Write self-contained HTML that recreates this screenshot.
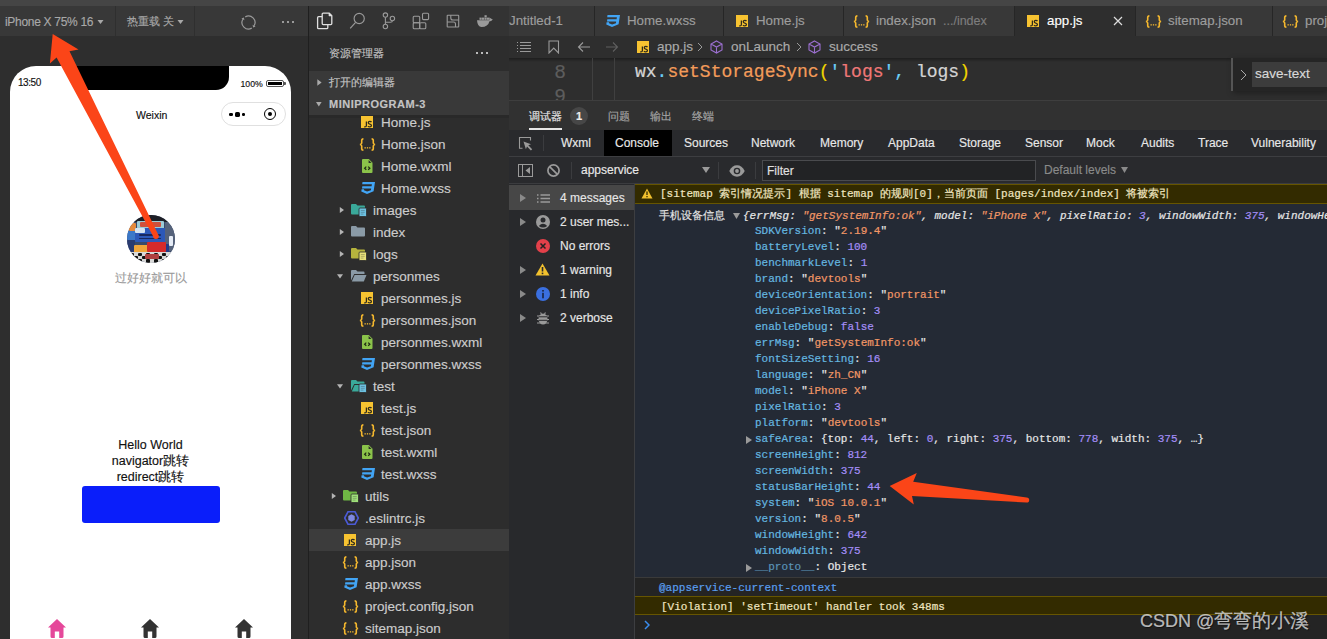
<!DOCTYPE html>
<html><head><meta charset="utf-8">
<style>
*{margin:0;padding:0;box-sizing:border-box}
html,body{width:1327px;height:639px;overflow:hidden;background:#2b2b2b;font-family:"Liberation Sans",sans-serif;position:relative}
.a{position:absolute}
.t{position:absolute;white-space:nowrap;line-height:1;-webkit-text-stroke:0.15px currentColor}
.mono{font-family:"Liberation Mono",monospace;-webkit-text-stroke:0.2px currentColor}
</style></head><body>
<div class="a" style="left:0px;top:0px;width:1327px;height:6px;background:#454545;"></div>
<div class="a" style="left:0px;top:6px;width:308px;height:30px;background:#383838;"></div>
<div class="a" style="left:0px;top:36px;width:308px;height:603px;background:#2e2e2e;"></div>
<div class="a" style="left:115px;top:6px;width:1px;height:30px;background:#2f2f2f;"></div>
<div class="a" style="left:194px;top:6px;width:1px;height:30px;background:#2f2f2f;"></div>
<div class="a" style="left:308px;top:6px;width:1px;height:633px;background:#1f1f1f;"></div>
<div class="t" style="left:5px;top:15.5px;font-size:12px;color:#a8a8a8;letter-spacing:-0.3px">iPhone X 75% 16</div>
<svg class="a" style="left:97px;top:19.5px;" width="7" height="5" viewBox="0 0 7 5"><path d="M0.5 0H6.5L3.5 4Z" fill="#a8a8a8"/></svg>
<div class="t" style="left:127px;top:15.5px;font-size:11px;color:#a8a8a8;">热重载 关</div>
<svg class="a" style="left:177px;top:19.5px;" width="7" height="5" viewBox="0 0 7 5"><path d="M0.5 0H6.5L3.5 4Z" fill="#a8a8a8"/></svg>
<svg class="a" style="left:240.6px;top:14.6px;" width="15" height="15" viewBox="0 0 15 15"><path d="M10.75 13.13A6.5 6.5 0 0 1 1.87 4.25M4.25 1.87A6.5 6.5 0 0 1 13.13 10.75" fill="none" stroke="#9a9a9a" stroke-width="1.2"/><path d="M2.9 2.5L0.4 3.4L3.4 5.2Z M12.1 12.5L14.6 11.6L11.6 9.8Z" fill="#9a9a9a"/></svg>
<div class="a" style="left:282px;top:21px;width:2px;height:2px;background:#9a9a9a;"></div>
<div class="a" style="left:287px;top:21px;width:2px;height:2px;background:#9a9a9a;"></div>
<div class="a" style="left:292px;top:21px;width:2px;height:2px;background:#9a9a9a;"></div>
<div class="a" style="left:10px;top:66px;width:281px;height:600px;background:#fff;border-radius:26px 26px 0 0;overflow:hidden">
<div class="a" style="left:62px;top:0;width:157px;height:24px;background:#000;border-radius:0 0 13px 13px"></div>
</div>
<div class="t" style="left:18px;top:77.8px;font-size:10px;color:#111;letter-spacing:-0.45px">13:50</div>
<div class="t" style="left:240.5px;top:80.3px;font-size:8.7px;color:#111;">100%</div>
<div class="a" style="left:266px;top:79.5px;width:18px;height:7.5px;border:1px solid #555;border-radius:2px"><div class="a" style="left:1px;top:1px;width:14px;height:3.5px;background:#000"></div></div>
<div class="a" style="left:284px;top:81.7px;width:1.8px;height:3.5px;background:#555;border-radius:0 1px 1px 0"></div>
<div class="t" style="left:136px;top:110px;font-size:10.5px;color:#111;">Weixin</div>
<div class="a" style="left:220.5px;top:101.8px;width:65px;height:24px;border:1px solid #e0e0e0;border-radius:12px;background:#fff"></div>
<div class="a" style="left:229px;top:112.8px;width:3.5px;height:3.5px;border-radius:1.2px;background:#000"></div>
<div class="a" style="left:234.8px;top:112px;width:5px;height:5px;border-radius:1.6px;background:#000"></div>
<div class="a" style="left:241.8px;top:112.8px;width:3.5px;height:3.5px;border-radius:1.2px;background:#000"></div>
<div class="a" style="left:263.7px;top:108.3px;width:12px;height:12px;border-radius:6px;border:1.7px solid #000"></div>
<div class="a" style="left:267.7px;top:112.3px;width:4px;height:4px;border-radius:2px;background:#000"></div>
<div class="a" style="left:127px;top:215px;width:48px;height:48px;border-radius:24px;overflow:hidden;filter:blur(0.6px)"><div class="a" style="left:0px;top:0px;width:48px;height:48px;background:#3a4a6a;border-radius:1px"></div><div class="a" style="left:0px;top:0px;width:48px;height:7px;background:#1d1f26;border-radius:1px"></div><div class="a" style="left:10px;top:6px;width:27px;height:8px;background:#9ccbd6;border-radius:1px"></div><div class="a" style="left:13px;top:7px;width:21px;height:5px;background:#d0503c;border-radius:1px"></div><div class="a" style="left:2px;top:8px;width:7px;height:8px;background:#e58a3c;border-radius:1px"></div><div class="a" style="left:0px;top:16px;width:9px;height:9px;background:#3b78c8;border-radius:1px"></div><div class="a" style="left:8px;top:13px;width:31px;height:14px;background:#2c58b8;border-radius:1px"></div><div class="a" style="left:8px;top:13px;width:10px;height:5px;background:#d6e4f0;border-radius:1px"></div><div class="a" style="left:12px;top:19px;width:22px;height:1.5px;background:#18285e;border-radius:1px"></div><div class="a" style="left:12px;top:22.5px;width:22px;height:1.5px;background:#18285e;border-radius:1px"></div><div class="a" style="left:38px;top:7px;width:10px;height:29px;background:#55627a;border-radius:1px"></div><div class="a" style="left:42px;top:21px;width:4px;height:10px;background:#e6ecf6;border-radius:1px"></div><div class="a" style="left:0px;top:25px;width:8px;height:12px;background:#2a3b70;border-radius:1px"></div><div class="a" style="left:36px;top:29px;width:6px;height:9px;background:#233a88;border-radius:1px"></div><div class="a" style="left:7px;top:29.5px;width:15px;height:8px;background:#f0a53a;border-radius:1px"></div><div class="a" style="left:20px;top:26.5px;width:19px;height:10.5px;background:#d42a2a;border-radius:1px"></div><div class="a" style="left:0px;top:37px;width:48px;height:11px;background:#d8d8d8;border-radius:1px"></div><div class="a" style="left:3px;top:38px;width:4px;height:3px;background:#111;border-radius:1px"></div><div class="a" style="left:11px;top:38px;width:4px;height:3px;background:#111;border-radius:1px"></div><div class="a" style="left:19px;top:38px;width:4px;height:3px;background:#111;border-radius:1px"></div><div class="a" style="left:27px;top:38px;width:4px;height:3px;background:#111;border-radius:1px"></div><div class="a" style="left:35px;top:38px;width:4px;height:3px;background:#111;border-radius:1px"></div><div class="a" style="left:43px;top:38px;width:4px;height:3px;background:#111;border-radius:1px"></div><div class="a" style="left:7px;top:41px;width:4px;height:3px;background:#111;border-radius:1px"></div><div class="a" style="left:15px;top:41px;width:4px;height:3px;background:#111;border-radius:1px"></div><div class="a" style="left:23px;top:41px;width:4px;height:3px;background:#111;border-radius:1px"></div><div class="a" style="left:31px;top:41px;width:4px;height:3px;background:#111;border-radius:1px"></div><div class="a" style="left:39px;top:41px;width:4px;height:3px;background:#111;border-radius:1px"></div><div class="a" style="left:3px;top:44px;width:4px;height:4px;background:#111;border-radius:1px"></div><div class="a" style="left:11px;top:44px;width:4px;height:4px;background:#111;border-radius:1px"></div><div class="a" style="left:19px;top:44px;width:4px;height:4px;background:#111;border-radius:1px"></div><div class="a" style="left:27px;top:44px;width:4px;height:4px;background:#111;border-radius:1px"></div><div class="a" style="left:35px;top:44px;width:4px;height:4px;background:#111;border-radius:1px"></div><div class="a" style="left:18px;top:39px;width:14px;height:5px;background:#b04040;border-radius:1px"></div></div>
<div class="t" style="left:115px;top:272px;font-size:12px;color:#999;">过好好就可以</div>
<div class="t" style="left:10px;top:437px;width:281px;text-align:center;font-size:12.5px;color:#111;line-height:16px">Hello World<br>navigator跳转<br>redirect跳转</div>
<div class="a" style="left:82px;top:486px;width:138px;height:37px;background:#0a1efa;border-radius:3px"></div>
<svg class="a" style="left:48px;top:619px;" width="18" height="20" viewBox="0 0 18 20"><path d="M9 0L18 8.5H15.5V17.5Q15.5 19 14 19H11.2V12.5H6.8V19H4Q2.5 19 2.5 17.5V8.5H0Z" fill="#e5489a"/></svg>
<svg class="a" style="left:141px;top:619px;" width="18" height="20" viewBox="0 0 18 20"><path d="M9 0L18 8.5H15.5V17.5Q15.5 19 14 19H11.2V12.5H6.8V19H4Q2.5 19 2.5 17.5V8.5H0Z" fill="#333"/></svg>
<svg class="a" style="left:235px;top:619px;" width="18" height="20" viewBox="0 0 18 20"><path d="M9 0L18 8.5H15.5V17.5Q15.5 19 14 19H11.2V12.5H6.8V19H4Q2.5 19 2.5 17.5V8.5H0Z" fill="#333"/></svg>
<div class="a" style="left:309px;top:6px;width:200px;height:633px;background:#2d2d2d;"></div>
<div class="a" style="left:309px;top:6px;width:200px;height:30px;background:#333333;"></div>
<svg class="a" style="left:310px;top:8px;" width="190" height="26" viewBox="0 0 190 26"><g fill="none" stroke-linejoin="round"><path d="M12.2 8.7H8.6Q7.6 8.7 7.6 9.7V19.7Q7.6 20.7 8.6 20.7H16.8Q17.8 20.7 17.8 19.7V16.6" stroke="#e0e0e0" stroke-width="1.3"/><path d="M13.2 5.1H19.3L21.8 7.6V15.6Q21.8 16.6 20.8 16.6H13.2Q12.2 16.6 12.2 15.6V6.1Q12.2 5.1 13.2 5.1Z M19.3 5.1V7.6H21.8" stroke="#e0e0e0" stroke-width="1.3"/><circle cx="49.2" cy="10.5" r="5.1" stroke="#9a9a9a" stroke-width="1.15"/><path d="M45.6 14.3L40.2 20.4" stroke="#9a9a9a" stroke-width="1.2"/><circle cx="75.4" cy="7.1" r="2.2" stroke="#9a9a9a" stroke-width="1.1"/><circle cx="75.4" cy="18.5" r="2.2" stroke="#9a9a9a" stroke-width="1.1"/><circle cx="82.4" cy="10.5" r="2.2" stroke="#9a9a9a" stroke-width="1.1"/><path d="M75.4 9.3V16.3M82.4 12.7Q82.4 14.3 80.5 14.3H75.4" stroke="#9a9a9a" stroke-width="1.1"/><rect x="103.2" y="8.2" width="6.5" height="6.5" rx="1" stroke="#9a9a9a" stroke-width="1.1"/><rect x="103.2" y="14.7" width="6.5" height="6.1" rx="1" stroke="#9a9a9a" stroke-width="1.1"/><rect x="109.7" y="14.7" width="6.1" height="6.1" rx="1" stroke="#9a9a9a" stroke-width="1.1"/><rect x="112.5" y="5.2" width="6.1" height="6.4" rx="1" stroke="#9a9a9a" stroke-width="1.1"/><rect x="137.2" y="7.2" width="11.5" height="11.8" rx="0.5" stroke="#9a9a9a" stroke-width="1.1"/><path d="M140.8 7.2V10Q140.8 12 142.8 12H148.7M137.2 14H143.5Q145.5 14 145.5 16V19" stroke="#9a9a9a" stroke-width="1.1"/></g><path d="M167 12.3H179.5Q180.5 10.5 182.7 11.5L181.5 12.7Q180 13.2 179.5 13.2Q178 19 171.5 19Q167.5 19 167 12.3Z" fill="#9a9a9a"/><path d="M179.3 9.5L182.7 11.5L179.3 13Z" fill="#9a9a9a"/><rect x="169.5" y="9.6" width="2.2" height="2.2" fill="#9a9a9a"/><rect x="172" y="9.6" width="2.2" height="2.2" fill="#9a9a9a"/><rect x="174.5" y="9.6" width="2.2" height="2.2" fill="#9a9a9a"/><rect x="177" y="9.6" width="2.2" height="2.2" fill="#9a9a9a"/><rect x="174.5" y="7.2" width="2.2" height="2.2" fill="#9a9a9a"/></svg>
<div class="t" style="left:329px;top:48px;font-size:11px;color:#c4c4c4;">资源管理器</div>
<div class="a" style="left:476px;top:52px;width:2px;height:2px;background:#bbb;"></div>
<div class="a" style="left:481px;top:52px;width:2px;height:2px;background:#bbb;"></div>
<div class="a" style="left:486px;top:52px;width:2px;height:2px;background:#bbb;"></div>
<div class="a" style="left:309px;top:71px;width:200px;height:44px;background:#393939;"></div>
<svg class="a" style="left:317px;top:79px;" width="5" height="7" viewBox="0 0 5 7"><path d="M0.3 0.3L4.6 3.5L0.3 6.7Z" fill="#aaa"/></svg>
<div class="t" style="left:329px;top:77px;font-size:11px;color:#c4c4c4;">打开的编辑器</div>
<svg class="a" style="left:316.3px;top:102.3px;" width="6" height="5" viewBox="0 0 6 5"><path d="M0 0H5.6L2.8 4.5Z" fill="#aaa"/></svg>
<div class="t" style="left:329px;top:99px;font-size:11px;color:#c4c4c4;font-weight:bold;letter-spacing:0.5px">MINIPROGRAM-3</div>
<div class="a" style="left:309px;top:115px;width:200px;height:3px;background:#262626;opacity:.6"></div>
<svg class="a" style="left:361px;top:116px" width="12" height="12" viewBox="0 0 12 12"><rect width="12" height="12" fill="#f7c331"/><path d="M5.4 5.4V9.4Q5.4 10.9 3.9 10.9H3.2" fill="none" stroke="#2e2a1c" stroke-width="1.3"/><path d="M10.5 6.2Q9.9 5.4 8.8 5.4Q7.3 5.4 7.3 6.8Q7.3 7.8 8.8 8.1Q10.4 8.4 10.4 9.5Q10.4 10.9 8.8 10.9Q7.5 10.9 6.9 10.1" fill="none" stroke="#2e2a1c" stroke-width="1.3"/></svg>
<div class="t" style="left:381px;top:115.6px;font-size:13.5px;color:#cccccc;">Home.js</div>
<svg class="a" style="left:359px;top:138px" width="17" height="13" viewBox="0 0 17 13"><path d="M4.4 0.9Q2.7 0.9 2.7 2.6V5Q2.7 6.2 1 6.5Q2.7 6.8 2.7 8V10.4Q2.7 12.1 4.4 12.1M12.6 0.9Q14.3 0.9 14.3 2.6V5Q14.3 6.2 16 6.5Q14.3 6.8 14.3 8V10.4Q14.3 12.1 12.6 12.1" fill="none" stroke="#f5b82e" stroke-width="1.6" stroke-linejoin="miter"/><rect x="5.5" y="9.2" width="1.3" height="1.3" fill="#f5b82e"/><rect x="7.85" y="9.2" width="1.3" height="1.3" fill="#f5b82e"/><rect x="10.2" y="9.2" width="1.3" height="1.3" fill="#f5b82e"/></svg>
<div class="t" style="left:381px;top:137.6px;font-size:13.5px;color:#cccccc;">Home.json</div>
<svg class="a" style="left:362px;top:159px" width="11" height="14" viewBox="0 0 11 14"><path d="M1 0H6.8L10.5 3.7V13Q10.5 14 9.5 14H1Q0 14 0 13V1Q0 0 1 0Z" fill="#8bc34a"/><path d="M6.6 1V3.9H9.5Z" fill="#2b2b2b"/><path d="M4.3 7.6L2.6 9.2L4.3 10.8M6.2 7.6L7.9 9.2L6.2 10.8" fill="none" stroke="#1e2a12" stroke-width="1.2"/></svg>
<div class="t" style="left:381px;top:159.6px;font-size:13.5px;color:#cccccc;">Home.wxml</div>
<svg class="a" style="left:361px;top:182px" width="14" height="12" viewBox="0 0 14 12"><path d="M1.5 0H14L12.6 9.3L6 12L0.3 9.4L0.6 7.3H3.1L3 8.3L6.1 9.5L9.9 8.2L10.2 6.4H1L1.3 4.2H10.6L10.9 2.2H1.2Z" fill="#42a5f5"/></svg>
<div class="t" style="left:381px;top:181.6px;font-size:13.5px;color:#cccccc;">Home.wxss</div>
<svg class="a" style="left:339px;top:206px" width="6" height="8" viewBox="0 0 6 8"><path d="M0.8 1L5 4L0.8 7Z" fill="#b4b4b4"/></svg>
<svg class="a" style="left:351px;top:203px" width="16" height="14" viewBox="0 0 16 14"><path d="M0 2Q0 1 1 1H5L6.5 2.5H13Q14 2.5 14 3.5V10.5Q14 11.5 13 11.5H1Q0 11.5 0 10.5Z" fill="#3aa99a"/><rect x="8" y="5" width="7.5" height="8.5" rx="1" fill="#6cc0e0" stroke="#2b2b2b" stroke-width="0.8"/><path d="M9.8 7.5H13.7M9.8 9.3H13.7M9.8 11.1H12.5" stroke="#2b2b2b" stroke-width="0.6" opacity="0.5"/></svg>
<div class="t" style="left:373px;top:203.6px;font-size:13.5px;color:#cccccc;">images</div>
<svg class="a" style="left:339px;top:228px" width="6" height="8" viewBox="0 0 6 8"><path d="M0.8 1L5 4L0.8 7Z" fill="#b4b4b4"/></svg>
<svg class="a" style="left:351px;top:225px" width="16" height="14" viewBox="0 0 16 14"><path d="M0 2Q0 1 1 1H5L6.5 2.5H13Q14 2.5 14 3.5V10.5Q14 11.5 13 11.5H1Q0 11.5 0 10.5Z" fill="#8a9aa6"/></svg>
<div class="t" style="left:373px;top:225.6px;font-size:13.5px;color:#cccccc;">index</div>
<svg class="a" style="left:339px;top:250px" width="6" height="8" viewBox="0 0 6 8"><path d="M0.8 1L5 4L0.8 7Z" fill="#b4b4b4"/></svg>
<svg class="a" style="left:351px;top:247px" width="16" height="14" viewBox="0 0 16 14"><path d="M0 2Q0 1 1 1H5L6.5 2.5H13Q14 2.5 14 3.5V10.5Q14 11.5 13 11.5H1Q0 11.5 0 10.5Z" fill="#b5b33d"/><rect x="8" y="5" width="7.5" height="8.5" rx="1" fill="#e7e07a" stroke="#2b2b2b" stroke-width="0.8"/><path d="M9.8 7.5H13.7M9.8 9.3H13.7M9.8 11.1H12.5" stroke="#2b2b2b" stroke-width="0.6" opacity="0.5"/></svg>
<div class="t" style="left:373px;top:247.6px;font-size:13.5px;color:#cccccc;">logs</div>
<svg class="a" style="left:337px;top:273.7px" width="6" height="5" viewBox="0 0 6 5"><path d="M0 0.2H6L3 4.5Z" fill="#b4b4b4"/></svg>
<svg class="a" style="left:351px;top:269px" width="16" height="14" viewBox="0 0 16 14"><path d="M0 2Q0 1 1 1H5L6.5 2.5H12.5Q13.5 2.5 13.5 3.5V5H3.2L0 11.5Z" fill="#8a9aa6"/><path d="M3.6 6H15.5L12.8 12.5H0.8Z" fill="#8a9aa6"/></svg>
<div class="t" style="left:373px;top:269.6px;font-size:13.5px;color:#cccccc;">personmes</div>
<svg class="a" style="left:361px;top:292px" width="12" height="12" viewBox="0 0 12 12"><rect width="12" height="12" fill="#f7c331"/><path d="M5.4 5.4V9.4Q5.4 10.9 3.9 10.9H3.2" fill="none" stroke="#2e2a1c" stroke-width="1.3"/><path d="M10.5 6.2Q9.9 5.4 8.8 5.4Q7.3 5.4 7.3 6.8Q7.3 7.8 8.8 8.1Q10.4 8.4 10.4 9.5Q10.4 10.9 8.8 10.9Q7.5 10.9 6.9 10.1" fill="none" stroke="#2e2a1c" stroke-width="1.3"/></svg>
<div class="t" style="left:381px;top:291.6px;font-size:13.5px;color:#cccccc;">personmes.js</div>
<svg class="a" style="left:359px;top:314px" width="17" height="13" viewBox="0 0 17 13"><path d="M4.4 0.9Q2.7 0.9 2.7 2.6V5Q2.7 6.2 1 6.5Q2.7 6.8 2.7 8V10.4Q2.7 12.1 4.4 12.1M12.6 0.9Q14.3 0.9 14.3 2.6V5Q14.3 6.2 16 6.5Q14.3 6.8 14.3 8V10.4Q14.3 12.1 12.6 12.1" fill="none" stroke="#f5b82e" stroke-width="1.6" stroke-linejoin="miter"/><rect x="5.5" y="9.2" width="1.3" height="1.3" fill="#f5b82e"/><rect x="7.85" y="9.2" width="1.3" height="1.3" fill="#f5b82e"/><rect x="10.2" y="9.2" width="1.3" height="1.3" fill="#f5b82e"/></svg>
<div class="t" style="left:381px;top:313.6px;font-size:13.5px;color:#cccccc;">personmes.json</div>
<svg class="a" style="left:362px;top:335px" width="11" height="14" viewBox="0 0 11 14"><path d="M1 0H6.8L10.5 3.7V13Q10.5 14 9.5 14H1Q0 14 0 13V1Q0 0 1 0Z" fill="#8bc34a"/><path d="M6.6 1V3.9H9.5Z" fill="#2b2b2b"/><path d="M4.3 7.6L2.6 9.2L4.3 10.8M6.2 7.6L7.9 9.2L6.2 10.8" fill="none" stroke="#1e2a12" stroke-width="1.2"/></svg>
<div class="t" style="left:381px;top:335.6px;font-size:13.5px;color:#cccccc;">personmes.wxml</div>
<svg class="a" style="left:361px;top:358px" width="14" height="12" viewBox="0 0 14 12"><path d="M1.5 0H14L12.6 9.3L6 12L0.3 9.4L0.6 7.3H3.1L3 8.3L6.1 9.5L9.9 8.2L10.2 6.4H1L1.3 4.2H10.6L10.9 2.2H1.2Z" fill="#42a5f5"/></svg>
<div class="t" style="left:381px;top:357.6px;font-size:13.5px;color:#cccccc;">personmes.wxss</div>
<svg class="a" style="left:337px;top:383.7px" width="6" height="5" viewBox="0 0 6 5"><path d="M0 0.2H6L3 4.5Z" fill="#b4b4b4"/></svg>
<svg class="a" style="left:351px;top:379px" width="16" height="14" viewBox="0 0 16 14"><path d="M0 2Q0 1 1 1H5L6.5 2.5H12.5Q13.5 2.5 13.5 3.5V5H3.2L0 11.5Z" fill="#3aa99a"/><path d="M3.6 6H15.5L12.8 12.5H0.8Z" fill="#3aa99a"/><rect x="8" y="5" width="7.5" height="8.5" rx="1" fill="#6cc0e0" stroke="#2b2b2b" stroke-width="0.8"/><path d="M9.8 7.5H13.7M9.8 9.3H13.7M9.8 11.1H12.5" stroke="#2b2b2b" stroke-width="0.6" opacity="0.5"/></svg>
<div class="t" style="left:373px;top:379.6px;font-size:13.5px;color:#cccccc;">test</div>
<svg class="a" style="left:361px;top:402px" width="12" height="12" viewBox="0 0 12 12"><rect width="12" height="12" fill="#f7c331"/><path d="M5.4 5.4V9.4Q5.4 10.9 3.9 10.9H3.2" fill="none" stroke="#2e2a1c" stroke-width="1.3"/><path d="M10.5 6.2Q9.9 5.4 8.8 5.4Q7.3 5.4 7.3 6.8Q7.3 7.8 8.8 8.1Q10.4 8.4 10.4 9.5Q10.4 10.9 8.8 10.9Q7.5 10.9 6.9 10.1" fill="none" stroke="#2e2a1c" stroke-width="1.3"/></svg>
<div class="t" style="left:381px;top:401.6px;font-size:13.5px;color:#cccccc;">test.js</div>
<svg class="a" style="left:359px;top:424px" width="17" height="13" viewBox="0 0 17 13"><path d="M4.4 0.9Q2.7 0.9 2.7 2.6V5Q2.7 6.2 1 6.5Q2.7 6.8 2.7 8V10.4Q2.7 12.1 4.4 12.1M12.6 0.9Q14.3 0.9 14.3 2.6V5Q14.3 6.2 16 6.5Q14.3 6.8 14.3 8V10.4Q14.3 12.1 12.6 12.1" fill="none" stroke="#f5b82e" stroke-width="1.6" stroke-linejoin="miter"/><rect x="5.5" y="9.2" width="1.3" height="1.3" fill="#f5b82e"/><rect x="7.85" y="9.2" width="1.3" height="1.3" fill="#f5b82e"/><rect x="10.2" y="9.2" width="1.3" height="1.3" fill="#f5b82e"/></svg>
<div class="t" style="left:381px;top:423.6px;font-size:13.5px;color:#cccccc;">test.json</div>
<svg class="a" style="left:362px;top:445px" width="11" height="14" viewBox="0 0 11 14"><path d="M1 0H6.8L10.5 3.7V13Q10.5 14 9.5 14H1Q0 14 0 13V1Q0 0 1 0Z" fill="#8bc34a"/><path d="M6.6 1V3.9H9.5Z" fill="#2b2b2b"/><path d="M4.3 7.6L2.6 9.2L4.3 10.8M6.2 7.6L7.9 9.2L6.2 10.8" fill="none" stroke="#1e2a12" stroke-width="1.2"/></svg>
<div class="t" style="left:381px;top:445.6px;font-size:13.5px;color:#cccccc;">test.wxml</div>
<svg class="a" style="left:361px;top:468px" width="14" height="12" viewBox="0 0 14 12"><path d="M1.5 0H14L12.6 9.3L6 12L0.3 9.4L0.6 7.3H3.1L3 8.3L6.1 9.5L9.9 8.2L10.2 6.4H1L1.3 4.2H10.6L10.9 2.2H1.2Z" fill="#42a5f5"/></svg>
<div class="t" style="left:381px;top:467.6px;font-size:13.5px;color:#cccccc;">test.wxss</div>
<svg class="a" style="left:331px;top:492px" width="6" height="8" viewBox="0 0 6 8"><path d="M0.8 1L5 4L0.8 7Z" fill="#b4b4b4"/></svg>
<svg class="a" style="left:343px;top:489px" width="16" height="14" viewBox="0 0 16 14"><path d="M0 2Q0 1 1 1H5L6.5 2.5H13Q14 2.5 14 3.5V10.5Q14 11.5 13 11.5H1Q0 11.5 0 10.5Z" fill="#6fb844"/><rect x="8" y="5" width="7.5" height="8.5" rx="1" fill="#9fe07a" stroke="#2b2b2b" stroke-width="0.8"/><path d="M9.8 7.5H13.7M9.8 9.3H13.7M9.8 11.1H12.5" stroke="#2b2b2b" stroke-width="0.6" opacity="0.5"/></svg>
<div class="t" style="left:365px;top:489.6px;font-size:13.5px;color:#cccccc;">utils</div>
<svg class="a" style="left:344px;top:511px" width="15" height="14" viewBox="0 0 15 14"><path d="M4 0.8H11L14.3 7L11 13.2H4L0.7 7Z" fill="none" stroke="#4b5ad6" stroke-width="1.6"/><path d="M7.5 3.3L10.7 5.1V8.9L7.5 10.7L4.3 8.9V5.1Z" fill="#7e88e0"/></svg>
<div class="t" style="left:365px;top:511.6px;font-size:13.5px;color:#cccccc;">.eslintrc.js</div>
<div class="a" style="left:309px;top:529px;width:200px;height:22px;background:#3c3c3c;"></div>
<svg class="a" style="left:344px;top:534px" width="12" height="12" viewBox="0 0 12 12"><rect width="12" height="12" fill="#f7c331"/><path d="M5.4 5.4V9.4Q5.4 10.9 3.9 10.9H3.2" fill="none" stroke="#2e2a1c" stroke-width="1.3"/><path d="M10.5 6.2Q9.9 5.4 8.8 5.4Q7.3 5.4 7.3 6.8Q7.3 7.8 8.8 8.1Q10.4 8.4 10.4 9.5Q10.4 10.9 8.8 10.9Q7.5 10.9 6.9 10.1" fill="none" stroke="#2e2a1c" stroke-width="1.3"/></svg>
<div class="t" style="left:365px;top:533.6px;font-size:13.5px;color:#cccccc;">app.js</div>
<svg class="a" style="left:342px;top:556px" width="17" height="13" viewBox="0 0 17 13"><path d="M4.4 0.9Q2.7 0.9 2.7 2.6V5Q2.7 6.2 1 6.5Q2.7 6.8 2.7 8V10.4Q2.7 12.1 4.4 12.1M12.6 0.9Q14.3 0.9 14.3 2.6V5Q14.3 6.2 16 6.5Q14.3 6.8 14.3 8V10.4Q14.3 12.1 12.6 12.1" fill="none" stroke="#f5b82e" stroke-width="1.6" stroke-linejoin="miter"/><rect x="5.5" y="9.2" width="1.3" height="1.3" fill="#f5b82e"/><rect x="7.85" y="9.2" width="1.3" height="1.3" fill="#f5b82e"/><rect x="10.2" y="9.2" width="1.3" height="1.3" fill="#f5b82e"/></svg>
<div class="t" style="left:365px;top:555.6px;font-size:13.5px;color:#cccccc;">app.json</div>
<svg class="a" style="left:344px;top:578px" width="14" height="12" viewBox="0 0 14 12"><path d="M1.5 0H14L12.6 9.3L6 12L0.3 9.4L0.6 7.3H3.1L3 8.3L6.1 9.5L9.9 8.2L10.2 6.4H1L1.3 4.2H10.6L10.9 2.2H1.2Z" fill="#42a5f5"/></svg>
<div class="t" style="left:365px;top:577.6px;font-size:13.5px;color:#cccccc;">app.wxss</div>
<svg class="a" style="left:342px;top:600px" width="17" height="13" viewBox="0 0 17 13"><path d="M4.4 0.9Q2.7 0.9 2.7 2.6V5Q2.7 6.2 1 6.5Q2.7 6.8 2.7 8V10.4Q2.7 12.1 4.4 12.1M12.6 0.9Q14.3 0.9 14.3 2.6V5Q14.3 6.2 16 6.5Q14.3 6.8 14.3 8V10.4Q14.3 12.1 12.6 12.1" fill="none" stroke="#f5b82e" stroke-width="1.6" stroke-linejoin="miter"/><rect x="5.5" y="9.2" width="1.3" height="1.3" fill="#f5b82e"/><rect x="7.85" y="9.2" width="1.3" height="1.3" fill="#f5b82e"/><rect x="10.2" y="9.2" width="1.3" height="1.3" fill="#f5b82e"/></svg>
<div class="t" style="left:365px;top:599.6px;font-size:13.5px;color:#cccccc;">project.config.json</div>
<svg class="a" style="left:342px;top:622px" width="17" height="13" viewBox="0 0 17 13"><path d="M4.4 0.9Q2.7 0.9 2.7 2.6V5Q2.7 6.2 1 6.5Q2.7 6.8 2.7 8V10.4Q2.7 12.1 4.4 12.1M12.6 0.9Q14.3 0.9 14.3 2.6V5Q14.3 6.2 16 6.5Q14.3 6.8 14.3 8V10.4Q14.3 12.1 12.6 12.1" fill="none" stroke="#f5b82e" stroke-width="1.6" stroke-linejoin="miter"/><rect x="5.5" y="9.2" width="1.3" height="1.3" fill="#f5b82e"/><rect x="7.85" y="9.2" width="1.3" height="1.3" fill="#f5b82e"/><rect x="10.2" y="9.2" width="1.3" height="1.3" fill="#f5b82e"/></svg>
<div class="t" style="left:365px;top:621.6px;font-size:13.5px;color:#cccccc;">sitemap.json</div>
<div class="a" style="left:509px;top:6px;width:818px;height:30px;background:#333333;"></div>
<div class="a" style="left:509px;top:6px;width:85px;height:30px;background:#383838;"></div>
<div class="t" style="left:509px;top:14.3px;font-size:13.3px;color:#9d9d9d;">Jntitled-1</div>
<div class="a" style="left:594px;top:6px;width:129px;height:30px;background:#383838;"></div>
<svg class="a" style="left:606px;top:15px" width="14" height="12" viewBox="0 0 14 12"><path d="M1.5 0H14L12.6 9.3L6 12L0.3 9.4L0.6 7.3H3.1L3 8.3L6.1 9.5L9.9 8.2L10.2 6.4H1L1.3 4.2H10.6L10.9 2.2H1.2Z" fill="#42a5f5"/></svg>
<div class="t" style="left:627px;top:14.3px;font-size:13.3px;color:#9d9d9d;">Home.wxss</div>
<div class="a" style="left:723px;top:6px;width:120px;height:30px;background:#383838;"></div>
<svg class="a" style="left:736px;top:15px" width="12" height="12" viewBox="0 0 12 12"><rect width="12" height="12" fill="#f7c331"/><path d="M5.4 5.4V9.4Q5.4 10.9 3.9 10.9H3.2" fill="none" stroke="#2e2a1c" stroke-width="1.3"/><path d="M10.5 6.2Q9.9 5.4 8.8 5.4Q7.3 5.4 7.3 6.8Q7.3 7.8 8.8 8.1Q10.4 8.4 10.4 9.5Q10.4 10.9 8.8 10.9Q7.5 10.9 6.9 10.1" fill="none" stroke="#2e2a1c" stroke-width="1.3"/></svg>
<div class="t" style="left:756px;top:14.3px;font-size:13.3px;color:#9d9d9d;">Home.js</div>
<div class="a" style="left:843px;top:6px;width:171px;height:30px;background:#383838;"></div>
<svg class="a" style="left:853px;top:14.5px" width="17" height="13" viewBox="0 0 17 13"><path d="M4.4 0.9Q2.7 0.9 2.7 2.6V5Q2.7 6.2 1 6.5Q2.7 6.8 2.7 8V10.4Q2.7 12.1 4.4 12.1M12.6 0.9Q14.3 0.9 14.3 2.6V5Q14.3 6.2 16 6.5Q14.3 6.8 14.3 8V10.4Q14.3 12.1 12.6 12.1" fill="none" stroke="#f5b82e" stroke-width="1.6" stroke-linejoin="miter"/><rect x="5.5" y="9.2" width="1.3" height="1.3" fill="#f5b82e"/><rect x="7.85" y="9.2" width="1.3" height="1.3" fill="#f5b82e"/><rect x="10.2" y="9.2" width="1.3" height="1.3" fill="#f5b82e"/></svg>
<div class="t" style="left:876px;top:14.3px;font-size:13.3px;color:#9d9d9d;">index.json</div>
<div class="a" style="left:1014px;top:6px;width:121px;height:30px;background:#2e2e2e;"></div>
<svg class="a" style="left:1027px;top:15px" width="12" height="12" viewBox="0 0 12 12"><rect width="12" height="12" fill="#f7c331"/><path d="M5.4 5.4V9.4Q5.4 10.9 3.9 10.9H3.2" fill="none" stroke="#2e2a1c" stroke-width="1.3"/><path d="M10.5 6.2Q9.9 5.4 8.8 5.4Q7.3 5.4 7.3 6.8Q7.3 7.8 8.8 8.1Q10.4 8.4 10.4 9.5Q10.4 10.9 8.8 10.9Q7.5 10.9 6.9 10.1" fill="none" stroke="#2e2a1c" stroke-width="1.3"/></svg>
<div class="t" style="left:1047px;top:14.3px;font-size:13.3px;color:#ffffff;">app.js</div>
<div class="a" style="left:1135px;top:6px;width:137px;height:30px;background:#383838;"></div>
<svg class="a" style="left:1145px;top:14.5px" width="17" height="13" viewBox="0 0 17 13"><path d="M4.4 0.9Q2.7 0.9 2.7 2.6V5Q2.7 6.2 1 6.5Q2.7 6.8 2.7 8V10.4Q2.7 12.1 4.4 12.1M12.6 0.9Q14.3 0.9 14.3 2.6V5Q14.3 6.2 16 6.5Q14.3 6.8 14.3 8V10.4Q14.3 12.1 12.6 12.1" fill="none" stroke="#f5b82e" stroke-width="1.6" stroke-linejoin="miter"/><rect x="5.5" y="9.2" width="1.3" height="1.3" fill="#f5b82e"/><rect x="7.85" y="9.2" width="1.3" height="1.3" fill="#f5b82e"/><rect x="10.2" y="9.2" width="1.3" height="1.3" fill="#f5b82e"/></svg>
<div class="t" style="left:1168px;top:14.3px;font-size:13.3px;color:#9d9d9d;">sitemap.json</div>
<div class="a" style="left:1272px;top:6px;width:128px;height:30px;background:#383838;"></div>
<svg class="a" style="left:1282px;top:14.5px" width="17" height="13" viewBox="0 0 17 13"><path d="M4.4 0.9Q2.7 0.9 2.7 2.6V5Q2.7 6.2 1 6.5Q2.7 6.8 2.7 8V10.4Q2.7 12.1 4.4 12.1M12.6 0.9Q14.3 0.9 14.3 2.6V5Q14.3 6.2 16 6.5Q14.3 6.8 14.3 8V10.4Q14.3 12.1 12.6 12.1" fill="none" stroke="#f5b82e" stroke-width="1.6" stroke-linejoin="miter"/><rect x="5.5" y="9.2" width="1.3" height="1.3" fill="#f5b82e"/><rect x="7.85" y="9.2" width="1.3" height="1.3" fill="#f5b82e"/><rect x="10.2" y="9.2" width="1.3" height="1.3" fill="#f5b82e"/></svg>
<div class="t" style="left:1305px;top:14.3px;font-size:13.3px;color:#9d9d9d;">proj</div>
<div class="t" style="left:943px;top:14.8px;font-size:12.5px;color:#7d7d7d;">.../index</div>
<div class="a" style="left:594px;top:6px;width:1px;height:30px;background:#262626;"></div>
<div class="a" style="left:723px;top:6px;width:1px;height:30px;background:#262626;"></div>
<div class="a" style="left:843px;top:6px;width:1px;height:30px;background:#262626;"></div>
<div class="a" style="left:1014px;top:6px;width:1px;height:30px;background:#262626;"></div>
<div class="a" style="left:1135px;top:6px;width:1px;height:30px;background:#262626;"></div>
<div class="a" style="left:1272px;top:6px;width:1px;height:30px;background:#262626;"></div>
<svg class="a" style="left:1113px;top:16px;" width="10" height="10" viewBox="0 0 10 10"><path d="M1 1L9 9M9 1L1 9" stroke="#ddd" stroke-width="1.2"/></svg>
<div class="a" style="left:509px;top:36px;width:818px;height:22px;background:#2e2e2e;"></div>
<svg class="a" style="left:516px;top:41px;" width="16" height="12" viewBox="0 0 16 12"><path d="M4 1.5H15M4 4.5H15M4 7.5H15M4 10.5H15" stroke="#9a9a9a" stroke-width="1"/><path d="M1 1.5H2M1 4.5H2M1 7.5H2M1 10.5H2" stroke="#9a9a9a" stroke-width="1"/></svg>
<svg class="a" style="left:548px;top:40px;" width="12" height="14" viewBox="0 0 12 14"><path d="M1 1H10.5V13L5.75 8L1 13Z" fill="none" stroke="#9a9a9a" stroke-width="1.1"/></svg>
<svg class="a" style="left:577px;top:41px;" width="14" height="12" viewBox="0 0 14 12"><path d="M13 6H1.5M6 1.5L1.5 6L6 10.5" fill="none" stroke="#9a9a9a" stroke-width="1.1"/></svg>
<svg class="a" style="left:605px;top:41px;" width="14" height="12" viewBox="0 0 14 12"><path d="M1 6H12.5M8 1.5L12.5 6L8 10.5" fill="none" stroke="#5f5f5f" stroke-width="1.1"/></svg>
<svg class="a" style="left:637px;top:41px" width="12" height="12" viewBox="0 0 12 12"><rect width="12" height="12" fill="#f7c331"/><path d="M5.4 5.4V9.4Q5.4 10.9 3.9 10.9H3.2" fill="none" stroke="#2e2a1c" stroke-width="1.3"/><path d="M10.5 6.2Q9.9 5.4 8.8 5.4Q7.3 5.4 7.3 6.8Q7.3 7.8 8.8 8.1Q10.4 8.4 10.4 9.5Q10.4 10.9 8.8 10.9Q7.5 10.9 6.9 10.1" fill="none" stroke="#2e2a1c" stroke-width="1.3"/></svg>
<div class="t" style="left:657px;top:39.5px;font-size:13.5px;color:#aaaaaa;">app.js</div>
<svg class="a" style="left:697px;top:42px;" width="6" height="10" viewBox="0 0 6 10"><path d="M1 1L5 5L1 9" fill="none" stroke="#999" stroke-width="1"/></svg>
<svg class="a" style="left:710px;top:40px;" width="13" height="14" viewBox="0 0 13 14"><path d="M6.5 1L12 4V10L6.5 13L1 10V4Z M1 4L6.5 7L12 4 M6.5 7V13" fill="none" stroke="#9b6fcf" stroke-width="1.1"/></svg>
<div class="t" style="left:731px;top:39.5px;font-size:13.5px;color:#aaaaaa;">onLaunch</div>
<svg class="a" style="left:796px;top:42px;" width="6" height="10" viewBox="0 0 6 10"><path d="M1 1L5 5L1 9" fill="none" stroke="#999" stroke-width="1"/></svg>
<svg class="a" style="left:808px;top:40px;" width="13" height="14" viewBox="0 0 13 14"><path d="M6.5 1L12 4V10L6.5 13L1 10V4Z M1 4L6.5 7L12 4 M6.5 7V13" fill="none" stroke="#9b6fcf" stroke-width="1.1"/></svg>
<div class="t" style="left:829px;top:39.5px;font-size:13.5px;color:#aaaaaa;">success</div>
<div class="a" style="left:509px;top:58px;width:818px;height:42px;background:#2e2e2e;"></div>
<div class="a" style="left:509px;top:58px;width:818px;height:4px;background:linear-gradient(rgba(0,0,0,.35),rgba(0,0,0,0));"></div>
<div class="t mono" style="left:509px;top:63.5px;font-size:19.5px;color:#5d5d5d;"><div style="width:57px;text-align:right">8</div></div>
<div class="t mono" style="left:509px;top:87.5px;font-size:19.5px;color:#5d5d5d;"><div style="width:57px;text-align:right">9</div></div>
<div class="a" style="left:592px;top:58px;width:1px;height:42px;background:#404040;"></div>
<div class="a" style="left:614px;top:58px;width:1px;height:42px;background:#404040;"></div>
<div class="t mono" style="left:635px;top:63px;font-size:18px;color:#d4d4d4">wx<span style="color:#6ccff6">.</span><span style="color:#f39c5a">setStorageSync</span><span style="color:#f1d600">(</span><span style="color:#6ccff6">'</span><span style="color:#f07878">logs</span><span style="color:#6ccff6">'</span><span style="color:#6ccff6">,</span> logs<span style="color:#f1d600">)</span></div>
<div class="a" style="left:1231px;top:58px;width:96px;height:42px;background:#2e2e2e;"></div>
<div class="a" style="left:1233px;top:58px;width:94px;height:33px;background:#252525;box-shadow:0 2px 6px rgba(0,0,0,.35)"></div>
<div class="a" style="left:1231px;top:58px;width:2px;height:33px;background:#555;"></div>
<svg class="a" style="left:1240px;top:69px;" width="7" height="12" viewBox="0 0 7 12"><path d="M1 1L6 6L1 11" fill="none" stroke="#aaa" stroke-width="1"/></svg>
<div class="a" style="left:1252px;top:62px;width:75px;height:25px;background:#3c3c3c;"></div>
<div class="t" style="left:1255px;top:67.2px;font-size:13.5px;color:#d8d8d8;">save-text</div>
<div class="a" style="left:509px;top:100px;width:818px;height:1px;background:#3e3e3e;"></div>
<div class="a" style="left:509px;top:101px;width:818px;height:29px;background:#313131;"></div>
<div class="t" style="left:529px;top:111px;font-size:11px;color:#e6e6e6;">调试器</div>
<div class="a" style="left:529px;top:128.3px;width:33px;height:1.6px;background:#e6e6e6;"></div>
<div class="a" style="left:570px;top:107px;width:18px;height:18px;border-radius:9px;background:#474747"></div>
<div class="t" style="left:576px;top:111px;font-size:11px;color:#eee;font-weight:bold">1</div>
<div class="t" style="left:608px;top:111px;font-size:11px;color:#a6a6a6;">问题</div>
<div class="t" style="left:650px;top:111px;font-size:11px;color:#a6a6a6;">输出</div>
<div class="t" style="left:692px;top:111px;font-size:11px;color:#a6a6a6;">终端</div>
<div class="a" style="left:509px;top:130px;width:818px;height:26px;background:#292a2d;"></div>
<div class="a" style="left:509px;top:156px;width:818px;height:1px;background:#3d3e41;"></div>
<svg class="a" style="left:518px;top:136px;" width="16" height="16" viewBox="0 0 16 16"><path d="M4.5 12.3H1.5V1.5H12.5V4.5" fill="none" stroke="#9a9a9a" stroke-width="1.1"/><path d="M5.5 5.5L13 8.2L10.3 9.3L14.2 13.2L12.9 14.5L9 10.6L7.9 13.2Z" fill="#9a9a9a"/></svg>
<div class="a" style="left:543px;top:135px;width:1px;height:16px;background:#3b3c3f;"></div>
<div class="a" style="left:604px;top:130px;width:68px;height:26px;background:#000;"></div>
<div class="t" style="left:561px;top:137px;font-size:12px;color:#e8e8e8;">Wxml</div>
<div class="t" style="left:615px;top:137px;font-size:12px;color:#e8e8e8;">Console</div>
<div class="t" style="left:684px;top:137px;font-size:12px;color:#e8e8e8;">Sources</div>
<div class="t" style="left:751px;top:137px;font-size:12px;color:#e8e8e8;">Network</div>
<div class="t" style="left:820px;top:137px;font-size:12px;color:#e8e8e8;">Memory</div>
<div class="t" style="left:888px;top:137px;font-size:12px;color:#e8e8e8;">AppData</div>
<div class="t" style="left:959px;top:137px;font-size:12px;color:#e8e8e8;">Storage</div>
<div class="t" style="left:1025px;top:137px;font-size:12px;color:#e8e8e8;">Sensor</div>
<div class="t" style="left:1086px;top:137px;font-size:12px;color:#e8e8e8;">Mock</div>
<div class="t" style="left:1141px;top:137px;font-size:12px;color:#e8e8e8;">Audits</div>
<div class="t" style="left:1198px;top:137px;font-size:12px;color:#e8e8e8;">Trace</div>
<div class="t" style="left:1251px;top:137px;font-size:12px;color:#e8e8e8;">Vulnerability</div>
<div class="a" style="left:509px;top:157px;width:818px;height:26px;background:#292a2d;"></div>
<div class="a" style="left:509px;top:183px;width:818px;height:1px;background:#3b3c3f;"></div>
<svg class="a" style="left:518px;top:164px;" width="15" height="13" viewBox="0 0 15 13"><rect x="0.5" y="0.5" width="14" height="12" fill="none" stroke="#9a9a9a" stroke-width="1"/><path d="M4.5 0.5V12.5" stroke="#9a9a9a" stroke-width="1"/><path d="M12 3L7.5 6.5L12 10Z" fill="#9a9a9a"/></svg>
<svg class="a" style="left:546px;top:163px;" width="15" height="15" viewBox="0 0 15 15"><circle cx="7.5" cy="7.5" r="5.6" fill="none" stroke="#9a9a9a" stroke-width="1.7"/><path d="M3.6 3.6L11.4 11.4" stroke="#9a9a9a" stroke-width="1.7"/></svg>
<div class="a" style="left:571px;top:162px;width:1px;height:17px;background:#3b3c3f;"></div>
<div class="t" style="left:581px;top:164px;font-size:12px;color:#e8e8e8;">appservice</div>
<svg class="a" style="left:702px;top:167px;" width="8" height="6" viewBox="0 0 8 6"><path d="M0 0H8L4 6Z" fill="#9a9a9a"/></svg>
<div class="a" style="left:718px;top:162px;width:1px;height:17px;background:#3b3c3f;"></div>
<svg class="a" style="left:729px;top:164.5px;" width="16" height="12" viewBox="0 0 16 12"><path d="M0.3 6Q3 0.3 8 0.3Q13 0.3 15.7 6Q13 11.7 8 11.7Q3 11.7 0.3 6Z" fill="#9a9a9a"/><circle cx="8" cy="6" r="3.3" fill="#292a2d"/><circle cx="8" cy="6" r="1.9" fill="#9a9a9a"/></svg>
<div class="a" style="left:755px;top:162px;width:1px;height:17px;background:#3b3c3f;"></div>
<div class="a" style="left:762px;top:160px;width:274px;height:21px;background:#222325;border:1px solid #4a4b4e"></div>
<div class="t" style="left:767px;top:164.8px;font-size:12px;color:#e0e0e0;">Filter</div>
<div class="t" style="left:1044px;top:164px;font-size:12px;color:#8a8a8a;">Default levels</div>
<svg class="a" style="left:1121px;top:167px;" width="7" height="6" viewBox="0 0 7 6"><path d="M0 0H7L3.5 6Z" fill="#8a8a8a"/></svg>
<div class="a" style="left:509px;top:184px;width:125px;height:455px;background:#28292c;"></div>
<div class="a" style="left:634px;top:184px;width:1px;height:455px;background:#3d3e41;"></div>
<div class="a" style="left:509px;top:185px;width:125px;height:25px;background:#474747;"></div>
<svg class="a" style="left:520px;top:194px;" width="6" height="8" viewBox="0 0 6 8"><path d="M0 0L6 4L0 8Z" fill="#8a8a8a"/></svg>
<svg class="a" style="left:536px;top:193px;" width="15" height="11" viewBox="0 0 15 11"><path d="M1 2H2.5M1 5.5H2.5M1 9H2.5" stroke="#9a9a9a" stroke-width="1.6"/><path d="M4.5 2H14M4.5 5.5H14M4.5 9H14" stroke="#9a9a9a" stroke-width="1.6"/></svg>
<div class="t" style="left:560px;top:192px;font-size:12px;color:#e6e6e6;">4 messages</div>
<svg class="a" style="left:520px;top:218px;" width="6" height="8" viewBox="0 0 6 8"><path d="M0 0L6 4L0 8Z" fill="#8a8a8a"/></svg>
<svg class="a" style="left:536px;top:215px;" width="14" height="14" viewBox="0 0 14 14"><circle cx="7" cy="7" r="7" fill="#9a9a9a"/><circle cx="7" cy="5" r="2.5" fill="#28292c"/><path d="M2.8 11Q7 6.5 11.2 11Q7 14 2.8 11Z" fill="#28292c"/></svg>
<div class="t" style="left:560px;top:216px;font-size:12px;color:#e6e6e6;">2 user mes...</div>
<svg class="a" style="left:536px;top:239px;" width="14" height="14" viewBox="0 0 14 14"><circle cx="7" cy="7" r="7" fill="#e3404a"/><path d="M4.5 4.5L9.5 9.5M9.5 4.5L4.5 9.5" stroke="#222" stroke-width="1.5"/></svg>
<div class="t" style="left:560px;top:240px;font-size:12px;color:#e6e6e6;">No errors</div>
<svg class="a" style="left:520px;top:266px;" width="6" height="8" viewBox="0 0 6 8"><path d="M0 0L6 4L0 8Z" fill="#8a8a8a"/></svg>
<svg class="a" style="left:535px;top:263px;" width="15" height="13" viewBox="0 0 15 13"><path d="M7.5 0.5L14.5 12.5H0.5Z" fill="#f2c12e"/><path d="M7.5 4V8.5" stroke="#28292c" stroke-width="1.6"/><rect x="6.7" y="9.6" width="1.6" height="1.6" fill="#28292c"/></svg>
<div class="t" style="left:560px;top:264px;font-size:12px;color:#e6e6e6;">1 warning</div>
<svg class="a" style="left:520px;top:290px;" width="6" height="8" viewBox="0 0 6 8"><path d="M0 0L6 4L0 8Z" fill="#8a8a8a"/></svg>
<svg class="a" style="left:536px;top:287px;" width="14" height="14" viewBox="0 0 14 14"><circle cx="7" cy="7" r="7" fill="#3a6fe0"/><rect x="6.2" y="5.8" width="1.6" height="5.5" fill="#1a2440"/><rect x="6.2" y="3" width="1.6" height="1.6" fill="#1a2440"/></svg>
<div class="t" style="left:560px;top:288px;font-size:12px;color:#e6e6e6;">1 info</div>
<svg class="a" style="left:520px;top:314px;" width="6" height="8" viewBox="0 0 6 8"><path d="M0 0L6 4L0 8Z" fill="#8a8a8a"/></svg>
<svg class="a" style="left:536px;top:311px;" width="14" height="14" viewBox="0 0 14 14"><ellipse cx="7" cy="8" rx="4.5" ry="5.5" fill="#9a9a9a"/><path d="M1 5H13M1 8.5H13M1 12H13M4.5 1.5L5.5 3M9.5 1.5L8.5 3" stroke="#9a9a9a" stroke-width="1.2"/><path d="M3 5.8H11M3 9.3H11" stroke="#28292c" stroke-width="1"/></svg>
<div class="t" style="left:560px;top:312px;font-size:12px;color:#e6e6e6;">2 verbose</div>
<div class="a" style="left:635px;top:184px;width:692px;height:394px;background:#242a35;"></div>
<div class="a" style="left:635px;top:184px;width:692px;height:20px;background:#332b00;border-top:1px solid #665500;border-bottom:1px solid #665500"></div>
<svg class="a" style="left:641px;top:188px;" width="12" height="11" viewBox="0 0 12 11"><path d="M6 0.5L11.5 10.5H0.5Z" fill="#f2c12e"/><path d="M6 3.5V7" stroke="#332b00" stroke-width="1.3"/><rect x="5.35" y="8" width="1.3" height="1.3" fill="#332b00"/></svg>
<div class="t mono" style="left:660px;top:189.3px;font-size:11px;color:#f0e6c0;">[sitemap 索引情况提示] 根据 sitemap 的规则[0]，当前页面 [pages/index/index] 将被索引</div>
<div class="t" style="left:659px;top:210px;font-size:11px;color:#e6e6e6;">手机设备信息</div>
<svg class="a" style="left:733px;top:213px;" width="7" height="6" viewBox="0 0 7 6"><path d="M0 0H7L3.5 6Z" fill="#9a9a9a"/></svg>
<div class="t mono" style="left:743px;top:211px;font-size:11px;color:#e6e6e6;font-style:italic">{<span style="color:#e6e6e6">errMsg</span>: <span style="color:#f29766">"getSystemInfo:ok"</span>, model: <span style="color:#f29766">"iPhone X"</span>, pixelRatio: <span style="color:#a48ef8">3</span>, windowWidth: <span style="color:#a48ef8">375</span>, windowHeight</div>
<div class="t mono" style="left:755px;top:226px;font-size:11px;color:#e6e6e6"><span style="color:#65b8e0">SDKVersion</span>: <span style="color:#e6e6e6">"</span><span style="color:#f29766">2.19.4</span><span style="color:#e6e6e6">"</span></div>
<div class="t mono" style="left:755px;top:242px;font-size:11px;color:#e6e6e6"><span style="color:#65b8e0">batteryLevel</span>: <span style="color:#a48ef8">100</span></div>
<div class="t mono" style="left:755px;top:258px;font-size:11px;color:#e6e6e6"><span style="color:#65b8e0">benchmarkLevel</span>: <span style="color:#a48ef8">1</span></div>
<div class="t mono" style="left:755px;top:274px;font-size:11px;color:#e6e6e6"><span style="color:#65b8e0">brand</span>: <span style="color:#e6e6e6">"</span><span style="color:#f29766">devtools</span><span style="color:#e6e6e6">"</span></div>
<div class="t mono" style="left:755px;top:290px;font-size:11px;color:#e6e6e6"><span style="color:#65b8e0">deviceOrientation</span>: <span style="color:#e6e6e6">"</span><span style="color:#f29766">portrait</span><span style="color:#e6e6e6">"</span></div>
<div class="t mono" style="left:755px;top:306px;font-size:11px;color:#e6e6e6"><span style="color:#65b8e0">devicePixelRatio</span>: <span style="color:#a48ef8">3</span></div>
<div class="t mono" style="left:755px;top:322px;font-size:11px;color:#e6e6e6"><span style="color:#65b8e0">enableDebug</span>: <span style="color:#a48ef8">false</span></div>
<div class="t mono" style="left:755px;top:338px;font-size:11px;color:#e6e6e6"><span style="color:#65b8e0">errMsg</span>: <span style="color:#e6e6e6">"</span><span style="color:#f29766">getSystemInfo:ok</span><span style="color:#e6e6e6">"</span></div>
<div class="t mono" style="left:755px;top:354px;font-size:11px;color:#e6e6e6"><span style="color:#65b8e0">fontSizeSetting</span>: <span style="color:#a48ef8">16</span></div>
<div class="t mono" style="left:755px;top:370px;font-size:11px;color:#e6e6e6"><span style="color:#65b8e0">language</span>: <span style="color:#e6e6e6">"</span><span style="color:#f29766">zh_CN</span><span style="color:#e6e6e6">"</span></div>
<div class="t mono" style="left:755px;top:386px;font-size:11px;color:#e6e6e6"><span style="color:#65b8e0">model</span>: <span style="color:#e6e6e6">"</span><span style="color:#f29766">iPhone X</span><span style="color:#e6e6e6">"</span></div>
<div class="t mono" style="left:755px;top:402px;font-size:11px;color:#e6e6e6"><span style="color:#65b8e0">pixelRatio</span>: <span style="color:#a48ef8">3</span></div>
<div class="t mono" style="left:755px;top:418px;font-size:11px;color:#e6e6e6"><span style="color:#65b8e0">platform</span>: <span style="color:#e6e6e6">"</span><span style="color:#f29766">devtools</span><span style="color:#e6e6e6">"</span></div>
<svg class="a" style="left:746px;top:436px;" width="6" height="8" viewBox="0 0 6 8"><path d="M0 0L6 4L0 8Z" fill="#9a9a9a"/></svg>
<div class="t mono" style="left:755px;top:434px;font-size:11px;color:#e6e6e6"><span style="color:#65b8e0">safeArea</span>: {top: <span style="color:#a48ef8">44</span>, left: <span style="color:#a48ef8">0</span>, right: <span style="color:#a48ef8">375</span>, bottom: <span style="color:#a48ef8">778</span>, width: <span style="color:#a48ef8">375</span>, …}</div>
<div class="t mono" style="left:755px;top:450px;font-size:11px;color:#e6e6e6"><span style="color:#65b8e0">screenHeight</span>: <span style="color:#a48ef8">812</span></div>
<div class="t mono" style="left:755px;top:466px;font-size:11px;color:#e6e6e6"><span style="color:#65b8e0">screenWidth</span>: <span style="color:#a48ef8">375</span></div>
<div class="t mono" style="left:755px;top:482px;font-size:11px;color:#e6e6e6"><span style="color:#65b8e0">statusBarHeight</span>: <span style="color:#a48ef8">44</span></div>
<div class="t mono" style="left:755px;top:498px;font-size:11px;color:#e6e6e6"><span style="color:#65b8e0">system</span>: <span style="color:#e6e6e6">"</span><span style="color:#f29766">iOS 10.0.1</span><span style="color:#e6e6e6">"</span></div>
<div class="t mono" style="left:755px;top:514px;font-size:11px;color:#e6e6e6"><span style="color:#65b8e0">version</span>: <span style="color:#e6e6e6">"</span><span style="color:#f29766">8.0.5</span><span style="color:#e6e6e6">"</span></div>
<div class="t mono" style="left:755px;top:530px;font-size:11px;color:#e6e6e6"><span style="color:#65b8e0">windowHeight</span>: <span style="color:#a48ef8">642</span></div>
<div class="t mono" style="left:755px;top:546px;font-size:11px;color:#e6e6e6"><span style="color:#65b8e0">windowWidth</span>: <span style="color:#a48ef8">375</span></div>
<svg class="a" style="left:746px;top:564px;" width="6" height="8" viewBox="0 0 6 8"><path d="M0 0L6 4L0 8Z" fill="#9a9a9a"/></svg>
<div class="t mono" style="left:755px;top:562px;font-size:11px;color:#e6e6e6"><span style="color:#5a93b8">__proto__</span>: <span style="color:#e6e6e6">Object</span></div>
<div class="a" style="left:635px;top:577px;width:692px;height:1px;background:#3a3a3a;"></div>
<div class="a" style="left:635px;top:578px;width:692px;height:61px;background:#242424;"></div>
<div class="t mono" style="left:659px;top:582.5px;font-size:11px;color:#5a9ff0;">@appservice-current-context</div>
<div class="a" style="left:635px;top:596px;width:692px;height:19px;background:#332b00;border-top:1px solid #665500;border-bottom:1px solid #665500"></div>
<div class="t mono" style="left:661px;top:601.5px;font-size:11px;color:#f0e6c0;">[Violation] 'setTimeout' handler took 348ms</div>
<svg class="a" style="left:644px;top:620px;" width="6" height="10" viewBox="0 0 6 10"><path d="M1 1L5 5L1 9" fill="none" stroke="#3a8ef0" stroke-width="1.5"/></svg>
<div class="t" style="left:1140px;top:610.5px;font-size:18px;color:rgba(225,225,225,0.8);text-shadow:1px 1px 1px rgba(0,0,0,.5)">CSDN @<span style="font-size:19px">弯弯的小溪</span></div>
<svg class="a" style="left:0px;top:0px;pointer-events:none" width="1327" height="639" viewBox="0 0 1327 639"><path d="M52.7 33.9L78.5 49.6L69.5 51.3L158.9 236A2.95 2.95 0 0 1 153 236L56.6 57.4L49.9 63.5Z" fill="#fb4518"/><path d="M889.7 485.9L916.8 473L913.2 481.7L1026.6 497.4A2.6 2.6 0 0 1 1026.6 502.6L912 496L913.8 504.6Z" fill="#fb4518"/></svg>
</body></html>
